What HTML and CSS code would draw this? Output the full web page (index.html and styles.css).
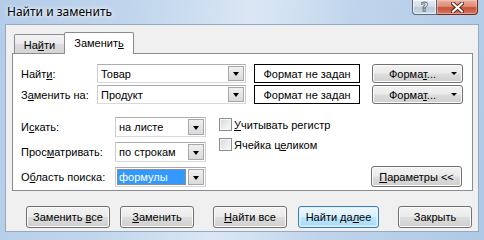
FILE: index.html
```html
<!DOCTYPE html>
<html lang="ru">
<head>
<meta charset="utf-8">
<title>Найти и заменить</title>
<link rel="stylesheet" href="styles.css">
</head>
<body>
<div class="window">
  <div class="titlebar">
    <span class="title">Найти и заменить</span>
    <div class="caption-btns">
      <div class="cbtn help"><span class="q">?</span></div>
      <div class="cbtn close">
        <svg width="13" height="11" viewBox="0 0 13 11">
          <path d="M2 1.5 L11 9.5 M11 1.5 L2 9.5" stroke="#5a2418" stroke-width="4" stroke-linecap="square"/>
          <path d="M2 1.5 L11 9.5 M11 1.5 L2 9.5" stroke="#ffffff" stroke-width="2" stroke-linecap="square"/>
        </svg>
      </div>
    </div>
  </div>
  <div class="client">
    <div class="tabs">
      <div class="tab"><span>На<u>й</u>ти</span></div>
      <div class="tab active"><span>Заменит<u>ь</u></span></div>
    </div>
    <div class="panel">
      <div class="row top-row">
        <span class="lbl lbl-top">Найт<u>и</u>:</span>
        <div class="combo combo-wide"><span class="val">Товар</span><span class="dd"><i class="tri"></i></span></div>
        <div class="fmtbox">Формат не задан</div>
        <div class="btn fmtbtn"><span>Форма<u>т</u>...</span><i class="tri small"></i></div>
      </div>
      <div class="row top-row second">
        <span class="lbl lbl-top">З<u>а</u>менить на:</span>
        <div class="combo combo-wide"><span class="val">Продукт</span><span class="dd"><i class="tri"></i></span></div>
        <div class="fmtbox">Формат не задан</div>
        <div class="btn fmtbtn"><span>Форма<u>т</u>...</span><i class="tri small"></i></div>
      </div>
      <div class="lower">
        <div class="opts">
          <div class="row opt-row">
            <span class="lbl lbl-low">И<u>с</u>кать:</span>
            <div class="combo combo-narrow"><span class="val">на листе</span><span class="dd"><i class="tri"></i></span></div>
          </div>
          <div class="row opt-row">
            <span class="lbl lbl-low">Прос<u>м</u>атривать:</span>
            <div class="combo combo-narrow"><span class="val">по строкам</span><span class="dd"><i class="tri"></i></span></div>
          </div>
          <div class="row opt-row">
            <span class="lbl lbl-low">О<u>б</u>ласть поиска:</span>
            <div class="combo combo-narrow"><span class="val sel">формулы</span><span class="dd"><i class="tri"></i></span></div>
          </div>
        </div>
        <div class="checks">
          <div class="check"><span class="box"></span><span><u>У</u>читывать регистр</span></div>
          <div class="check"><span class="box"></span><span>Ячейка ц<u>е</u>ликом</span></div>
        </div>
        <div class="btn params"><span><u>П</u>араметры &lt;&lt;</span></div>
      </div>
    </div>
    <div class="actions">
      <div class="btn act a1"><span>Заменить <u>в</u>се</span></div>
      <div class="btn act a2"><span><u>З</u>аменить</span></div>
      <div class="btn act a3"><span><u>Н</u>айти все</span></div>
      <div class="btn act a4 default"><span>Найти да<u>л</u>ее</span></div>
      <div class="btn act a5"><span>Закрыть</span></div>
    </div>
  </div>
</div>
</body>
</html>
```
FILE: styles.css
```css
* { box-sizing: border-box; }
html, body { margin: 0; padding: 0; }
body {
  width: 484px;
  height: 240px;
  overflow: hidden;
  font-family: "Liberation Sans", Arial, sans-serif;
  font-size: 11px;
  color: #000;
}
u { text-decoration: underline; text-underline-offset: 1px; }

.window {
  width: 484px;
  height: 240px;
  background: linear-gradient(100deg, #b3cce8 0%, #c4d8ee 30%, #dae6f4 48%, #d1e1f2 56%, #bfd4ec 68%, #afc9e6 100%);
}

.titlebar {
  height: 24px;
  display: flex;
  justify-content: space-between;
  align-items: flex-start;
}
.title {
  font-family: "Noto Sans", "Liberation Sans", sans-serif;
  font-size: 12px;
  line-height: 15px;
  padding: 4px 0 0 7px;
  color: #000;
  text-shadow: 0 0 6px rgba(255,255,255,0.95), 0 0 3px rgba(255,255,255,0.9);
}
.caption-btns {
  display: flex;
  margin-right: 6px;
}
.cbtn {
  height: 15px;
  display: flex;
  align-items: center;
  justify-content: center;
  border: 1px solid #59687d;
  border-top: none;
}
.help {
  width: 25px;
  border-radius: 0 0 0 4px;
  background: linear-gradient(#e6edf5 0%, #d3deea 45%, #bccbdd 55%, #cbd8e7 100%);
  box-shadow: inset 0 0 0 1px rgba(255,255,255,0.6);
}
.help .q {
  font-family: "DejaVu Sans", sans-serif;
  font-weight: bold;
  font-size: 13px;
  line-height: 13px;
  color: #fff;
  -webkit-text-stroke: 0.8px #5d6672;
  margin-top: -1px;
}
.close {
  width: 41px;
  border-left: none;
  border-color: #6a2c1f;
  border-radius: 0 0 4px 0;
  background: linear-gradient(#eab0a1 0%, #df8d78 45%, #c85238 55%, #d67760 100%);
  box-shadow: inset 0 0 0 1px rgba(255,220,210,0.45);
}

.client {
  margin-left: 5px;
  width: 474px;
  height: 208px;
  background: #f0f0f0;
  border: 1px solid #97a9c0;
  padding: 7px 5px 0 6px;
}

.tabs {
  display: flex;
  align-items: flex-end;
  height: 21px;
  padding-left: 2px;
}
.tab {
  height: 19px;
  width: 51px;
  border: 1px solid #898c95;
  border-bottom: none;
  border-radius: 2px 2px 0 0;
  background: linear-gradient(#f3f3f3 0%, #ebebeb 50%, #dddddd 51%, #d4d4d4 100%);
  display: flex;
  align-items: center;
  justify-content: center;
  padding-top: 2px;
}
.tab.active {
  height: 22px;
  width: 70px;
  margin-left: -1px;
  margin-bottom: -1px;
  background: #fff;
  position: relative;
  z-index: 1;
  padding-top: 0;
  padding-bottom: 2px;
}

.panel {
  width: 461px;
  height: 138px;
  background: #fff;
  border: 1px solid #898c95;
  padding: 10px 0 3px 8px;
}

.row {
  display: flex;
  align-items: center;
}
.top-row { height: 19px; }
.top-row.second { margin-top: 2px; }
.lbl { white-space: nowrap; }
.lbl-top { width: 76px; }
.lbl-low { width: 94px; }

.combo {
  height: 100%;
  display: flex;
  align-items: stretch;
  background: #fff;
  border: 1px solid;
  border-color: #abadb3 #c9cdd4 #d5dae1 #c9cdd4;
}
.combo-wide { width: 149px; }
.combo-narrow { width: 91px; }
.combo .val {
  flex: 1;
  display: flex;
  align-items: center;
  padding-left: 2px;
  margin: 1px;
  white-space: nowrap;
}
.combo .val.sel {
  background: #3399ff;
  color: #fff;
  outline: 1px dotted #d7892a;
  outline-offset: -1px;
}
.dd {
  width: 16px;
  margin: 1px;
  border: 1px solid #a7a7a7;
  background: linear-gradient(#f0f0f0, #dadada);
  display: flex;
  align-items: center;
  justify-content: center;
}
.tri {
  display: block;
  width: 0;
  height: 0;
  border-left: 3.5px solid transparent;
  border-right: 3.5px solid transparent;
  border-top: 4px solid #000;
  margin-top: 1px;
}
.tri.small {
  border-left-width: 3px;
  border-right-width: 3px;
  border-top-width: 3px;
}

.fmtbox {
  width: 106px;
  height: 100%;
  margin-left: 8px;
  border: 1px solid #000;
  display: flex;
  align-items: center;
  justify-content: center;
  white-space: nowrap;
}

.btn {
  border: 1px solid #707070;
  border-radius: 3px;
  background: linear-gradient(#f2f2f2 0%, #ebebeb 49%, #dddddd 51%, #cfcfcf 100%);
  box-shadow: inset 0 0 0 1px #fbfbfb;
  display: flex;
  align-items: center;
  justify-content: center;
  white-space: nowrap;
}
.fmtbtn {
  width: 91px;
  height: 100%;
  margin-left: 12px;
  position: relative;
  padding-right: 10px;
}
.fmtbtn .tri {
  position: absolute;
  right: 5px;
  top: 7px;
  margin: 0;
}

.lower {
  display: flex;
  margin-top: 13px;
}
.opts {
  display: flex;
  flex-direction: column;
  gap: 5px;
}
.opt-row { height: 20px; }

.checks {
  margin-left: 13px;
  padding-top: 1px;
  display: flex;
  flex-direction: column;
  gap: 7px;
  width: 140px;
}
.check {
  display: flex;
  align-items: center;
  height: 13px;
  white-space: nowrap;
}
.box {
  width: 13px;
  height: 13px;
  border: 1px solid #8e8f8f;
  background: linear-gradient(135deg, #d4d6da 0%, #eceef0 60%, #f8f8f8 100%);
  box-shadow: inset 0 0 0 1px #f4f4f4;
  margin-right: 2px;
  flex: none;
}

.params {
  width: 91px;
  height: 21px;
  align-self: flex-end;
  margin-left: auto;
  margin-right: 10px;
}

.actions {
  display: flex;
  margin-top: 15px;
  height: 22px;
}
.act { height: 22px; }
.a1 { width: 84px; margin-left: 14px; }
.a2 { width: 74px; margin-left: 10px; }
.a3 { width: 74px; margin-left: 19px; }
.a4 { width: 81px; margin-left: 11px; }
.a5 { width: 74px; margin-left: 19px; }
.btn.default {
  border-color: #3c7fb1;
  background: linear-gradient(#eaf6fd 0%, #d9f0fc 49%, #bee6fd 51%, #a7d9f5 100%);
  box-shadow: inset 0 0 0 1px #d8f0fb, inset 0 0 0 2px rgba(255,255,255,0.35);
}
```
